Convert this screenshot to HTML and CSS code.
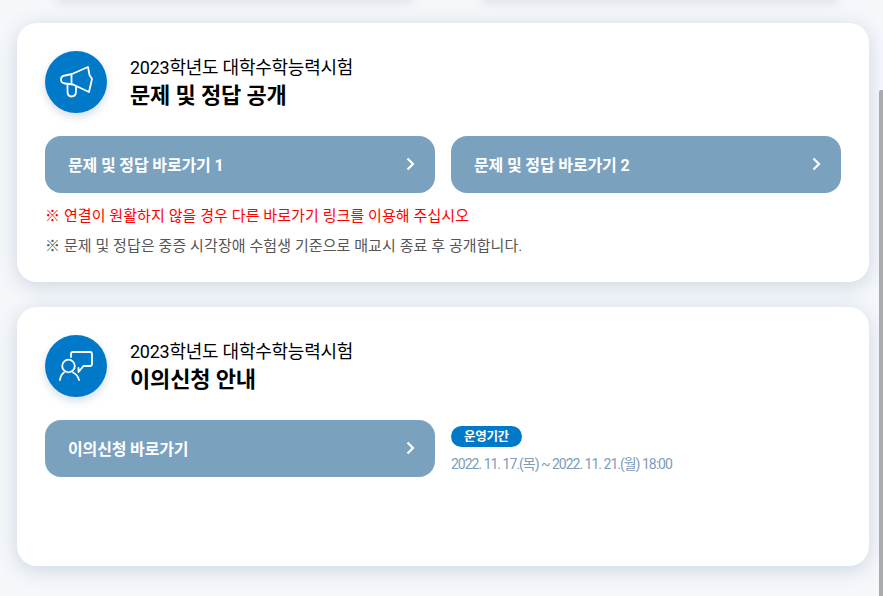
FILE: index.html
```html
<!DOCTYPE html>
<html lang="ko">

<head>
    <meta charset="UTF-8">
    <meta name="viewport" content="width=device-width, initial-scale=1.0">
    <title>문제 및 정답 공개</title>
    <link rel="stylesheet" href="styles.css">
</head>

<body>
    <div class="page">
        <div class="prev-row">
            <div class="prev-card"></div>
            <div class="prev-card"></div>
        </div>

        <section class="card">
            <div class="card-head">
                <div class="icon-circle">
                    <svg width="36" height="36" viewBox="0 0 36 36" fill="none" stroke="#fff" stroke-width="1.800" stroke-linecap="round" stroke-linejoin="round">
                        <path d="M30 3 L31.500 11 L34 15 L31 28 L15 20.500 L7 19.500 Q3 19 3 15.500 Q3 12 7 11.500 L14 10 Z"/>
                        <path d="M13.500 11 V19.500"/>
                        <path d="M9.500 20 V27.500 Q9.500 32.500 13.500 32.500 Q18 32.500 18 27.500 V23"/>
                    </svg>
                </div>
                <div class="head-text">
                    <p class="sub-title">2023학년도 대학수학능력시험</p>
                    <h2 class="main-title">문제 및 정답 공개</h2>
                </div>
            </div>
            <div class="btn-row">
                <a class="go-btn" href="#">문제 및 정답 바로가기 1
                    <svg class="arrow" width="9" height="14" viewBox="0 0 9 14" fill="none" stroke="#fff" stroke-width="2.200"><path d="M1.500 1.500 L7 7 L1.500 12.500"/></svg>
                </a>
                <a class="go-btn" href="#">문제 및 정답 바로가기 2
                    <svg class="arrow" width="9" height="14" viewBox="0 0 9 14" fill="none" stroke="#fff" stroke-width="2.200"><path d="M1.500 1.500 L7 7 L1.500 12.500"/></svg>
                </a>
            </div>
            <p class="note note-red">※ 연결이 원활하지 않을 경우 다른 바로가기 링크를 이용해 주십시오</p>
            <p class="note">※ 문제 및 정답은 중증 시각장애 수험생 기준으로 매교시 종료 후 공개합니다.</p>
        </section>

        <section class="card">
            <div class="card-head">
                <div class="icon-circle">
                    <svg width="36" height="36" viewBox="0 0 36 36" fill="none" stroke="#fff" stroke-width="1.800" stroke-linecap="round" stroke-linejoin="round">
                        <path d="M13 9 V6 Q13 4 15 4 H32 Q34 4 34 6 V16 Q34 18 32 18 H25.500 L20.500 24 V20"/>
                        <circle cx="10.500" cy="18" r="6.300"/>
                        <path d="M2 32 Q2.500 27 6 24.500"/>
                        <path d="M15 24.500 Q20 27 21 32"/>
                    </svg>
                </div>
                <div class="head-text">
                    <p class="sub-title">2023학년도 대학수학능력시험</p>
                    <h2 class="main-title">이의신청 안내</h2>
                </div>
            </div>
            <div class="btn-row">
                <a class="go-btn" href="#">이의신청 바로가기
                    <svg class="arrow" width="9" height="14" viewBox="0 0 9 14" fill="none" stroke="#fff" stroke-width="2.200"><path d="M1.500 1.500 L7 7 L1.500 12.500"/></svg>
                </a>
                <div class="period">
                    <span class="badge">운영기간</span>
                    <p class="period-date">2022. 11. 17.(목) ~ 2022. 11. 21.(월) 18:00</p>
                </div>
            </div>
        </section>
    </div>

    <div class="scroll-thumb"></div>
</body>
</html>
```

FILE: styles.css
```css
html, body {
    height: 100%;
    margin: 0;
    overflow: hidden;
}

body {
    background-color: #f5f7fa;
    font-family: Roboto, "Noto Sans CJK KR", sans-serif;
    color: #000;
}

p, h2 {
    margin: 0;
}

.page {
    padding: 0 14px 0 17px;
}

.prev-row {
    display: flex;
    gap: 75px;
    height: 23px;
    padding: 0 34px 0 42px;
}

.prev-card {
    flex: 1;
    height: 0;
    box-shadow: 0 0 10px 3px #d5dce5;
}

.card {
    box-sizing: border-box;
    height: 259px;
    margin-bottom: 25px;
    padding: 28px;
    background-color: #fff;
    border-radius: 20px;
    box-shadow: 0 4px 20px #ccd6e2;
}

.card-head {
    display: flex;
    align-items: center;
    gap: 23px;
}

.icon-circle {
    display: flex;
    justify-content: center;
    align-items: center;
    width: 62px;
    height: 62px;
    flex-shrink: 0;
    background-color: #0079c8;
    border-radius: 50%;
    box-shadow: 0 4px 10px #d5dee8;
}

.head-text {
    padding-top: 2px;
}

.sub-title {
    font-size: 18px;
    line-height: 24px;
    letter-spacing: -0.25px;
}

.main-title {
    margin-top: 1px;
    font-size: 22px;
    font-weight: 700;
    line-height: 30px;
    letter-spacing: -0.15px;
}

.btn-row {
    display: flex;
    gap: 16px;
    margin-top: 23px;
}

.go-btn {
    display: flex;
    justify-content: space-between;
    align-items: center;
    box-sizing: border-box;
    width: 390px;
    height: 57px;
    padding: 0 20px 2px 23px;
    background-color: #7aa2bf;
    border-radius: 16px;
    color: #fff;
    font-size: 16px;
    font-weight: 700;
    letter-spacing: -0.15px;
    text-decoration: none;
}

.note {
    margin-top: 9px;
    font-size: 15px;
    line-height: 21px;
    letter-spacing: 0.08px;
    color: #555;
}

.note-red {
    margin-top: 13px;
    color: #f00;
}

.period {
    padding-top: 6px;
}

.badge {
    display: inline-block;
    padding: 0 13px;
    background-color: #0079c8;
    border-radius: 11px;
    color: #fff;
    font-size: 12.5px;
    font-weight: 700;
    line-height: 21px;
    letter-spacing: -0.3px;
}

.period-date {
    margin-top: 7px;
    font-size: 14px;
    line-height: 21px;
    letter-spacing: -1px;
    color: #7c9cbc;
}

.scroll-thumb {
    position: absolute;
    top: 90px;
    right: 0;
    bottom: 0;
    width: 4px;
    background-color: #a8abae;
    border-radius: 2px 0 0 0;
}
```
